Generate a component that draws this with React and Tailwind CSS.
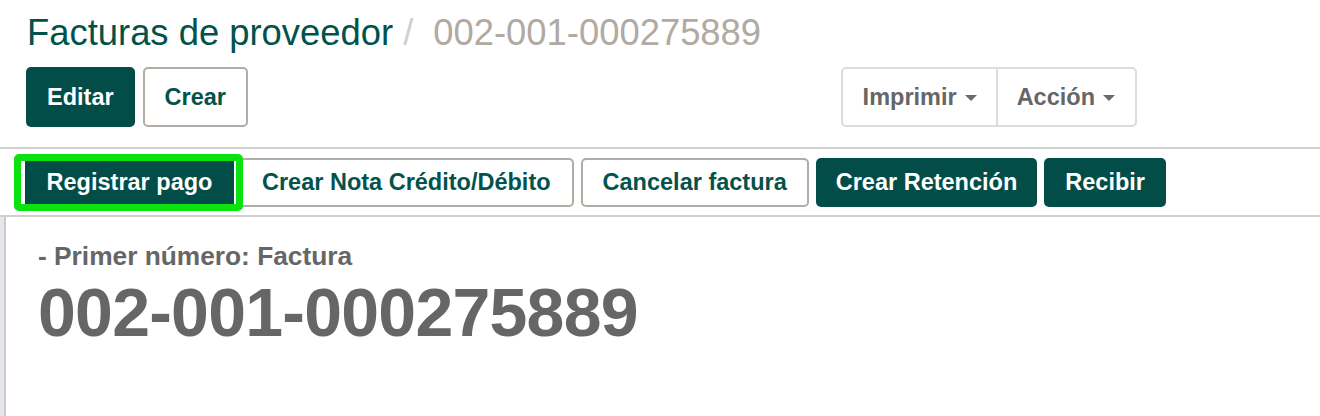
import React from "react";

const teal = "bg-[#034d48]";

const Caret = () => (
  <span className="inline-block w-0 h-0 border-x-[6px] border-t-[6px] border-x-transparent border-t-[#6b6b6b] ml-2 translate-y-[1px]" />
);

export default function App() {
  return (
    <div className="w-[1320px] h-[416px] bg-white overflow-hidden font-['Liberation_Sans',Arial,sans-serif]">
      {/* Header */}
      <div className="px-[26px] pt-[15px]">
        <div className="flex items-baseline text-[36.4px] leading-none">
          <span className="text-[#01524b] pl-px">Facturas de proveedor</span>
          <span className="text-[#d0d0d0] ml-[10px] mr-[20px]">/</span>
          <span className="text-[#b1aaa2]">002-001-000275889</span>
        </div>

        <div className="flex items-center mt-[16px]">
          <button className={`${teal} h-[60px] px-[21px] rounded-[5px] text-white text-[23.5px] font-bold`}>
            Editar
          </button>
          <button className="h-[60px] ml-[8px] px-[20px] rounded-[5px] border-2 border-[#b3aca5] bg-white text-[#03524b] text-[23.5px] font-bold">
            Crear
          </button>

          <div className="ml-auto mr-[157px] flex h-[60px] rounded-[5px] border-2 border-[#dcdcdc] text-[#666] text-[23.5px] font-bold">
            <button className="flex items-center pl-[20px] pr-[19px] border-r-2 border-[#dcdcdc]">
              Imprimir
              <Caret />
            </button>
            <button className="flex items-center pl-[19px] pr-[20px]">
              Acción
              <Caret />
            </button>
          </div>
        </div>
      </div>

      {/* Status bar */}
      <div className="mt-[20px] border-y-2 border-[#cfcfcf] h-[70px] flex items-center pl-[14px]">
        <div className="border-[7px] border-[#0ae30f] rounded-[5px]">
          <button className={`${teal} h-[43px] w-[215px] border-l-[4px] border-r-[2px] border-white text-white text-[23.5px] font-bold`}>
            Registrar pago
          </button>
        </div>
        <div className="flex items-center gap-[7px]">
          <button className="h-[49px] pl-[19px] pr-[21px] rounded-r-[5px] border-2 border-l-0 border-[#b3aca5] text-[#03524b] text-[23.5px] font-bold">
            Crear Nota Crédito/Débito
          </button>
          <button className="h-[49px] px-[20px] rounded-[5px] border-2 border-[#b3aca5] text-[#03524b] text-[23.5px] font-bold">
            Cancelar factura
          </button>
          <button className={`${teal} h-[49px] px-[20px] rounded-[5px] text-white text-[23.5px] font-bold`}>
            Crear Retención
          </button>
          <button className={`${teal} h-[49px] px-[21px] rounded-[5px] text-white text-[23.5px] font-bold`}>
            Recibir
          </button>
        </div>
      </div>

      {/* Sheet */}
      <div className="flex h-full">
        <div className="w-[6px] bg-[#e6e6e6] border-r-2 border-[#c9c9d7]" />
        <div className="pl-[32px] pt-[26px] text-[#666] font-bold">
          <div className="text-[26.3px] leading-none">- Primer número: Factura</div>
          <div className="text-[68px] leading-none mt-[8px] tracking-[-0.75px]">002-001-000275889</div>
        </div>
      </div>
    </div>
  );
}
